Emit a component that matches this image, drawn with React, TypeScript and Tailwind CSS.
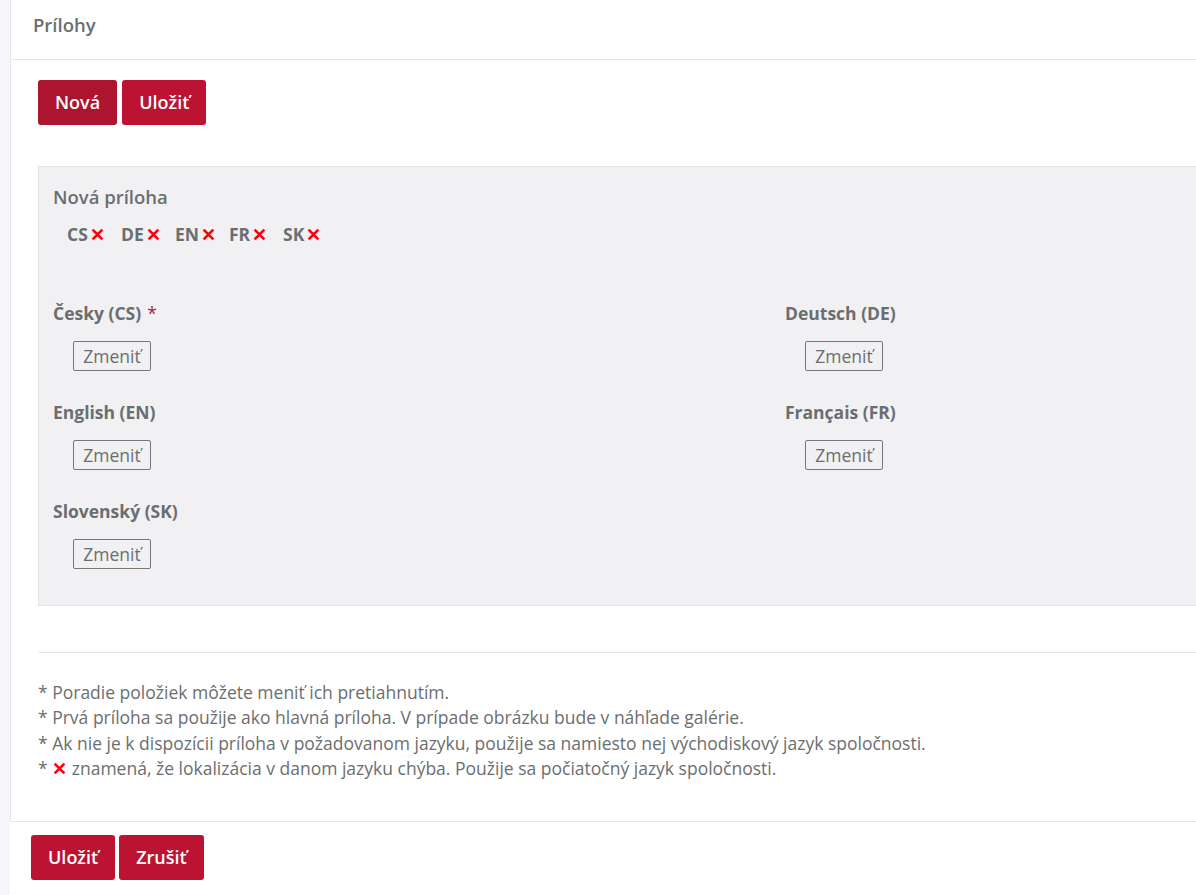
const langs = ['CS', 'DE', 'EN', 'FR', 'SK']

const fields = [
  { label: 'Česky (CS)', required: true },
  { label: 'Deutsch (DE)' },
  { label: 'English (EN)' },
  { label: 'Français (FR)' },
  { label: 'Slovenský (SK)' },
]

function Cross() {
  return <span className="text-[#ff0000] font-bold ml-[2px]">✕</span>
}

function RedButton({ children, dark }: { children: React.ReactNode; dark?: boolean }) {
  return (
    <button
      className={`h-[45px] px-[17px] rounded-[3px] text-white text-[18px] font-semibold ${
        dark ? 'bg-[#ad1430]' : 'bg-[#bb1331]'
      }`}
    >
      {children}
    </button>
  )
}

export default function App() {
  return (
    <div
      className="w-[1196px] h-[895px] overflow-hidden bg-[#f4f6f9] text-[#6b6e70]"
      style={{ fontFamily: '"Open Sans", "Liberation Sans", sans-serif' }}
    >
      <div className="ml-[10px] w-[1560px] bg-white">
        <div className="border-l border-b border-[#e6e6e6]">
          <div className="h-[60px] pt-[12px] pl-[22px] text-[18.5px] leading-[26px] font-semibold border-b border-[#e6e6e6]">
            Prílohy
          </div>
          <div className="px-[27px] pt-[20px] pb-[40px]">
            <div className="flex gap-[5px]">
              <RedButton dark>Nová</RedButton>
              <RedButton>Uložiť</RedButton>
            </div>

            <div className="mt-[41px] bg-[#f1f1f3] border border-[#e4e4e6] pl-[14px] pt-[17px] pb-[36px]">
              <div className="text-[18.5px] font-semibold leading-[26px]">Nová príloha</div>
              <div className="flex pl-[14px] mt-[12px] text-[17.5px] font-bold leading-[24px]">
                {langs.map((l) => (
                  <span key={l} className="w-[54px]">
                    {l}
                    <Cross />
                  </span>
                ))}
              </div>
              <div className="grid grid-cols-2 w-[1464px] mt-[54px] gap-y-[28px]">
                {fields.map((f) => (
                  <div key={f.label}>
                    <div className="text-[17.5px] font-bold leading-[26px]">
                      {f.label}
                      {f.required && <span className="text-[#a52a3a] font-normal ml-[6px]">*</span>}
                    </div>
                    <button className="block ml-[20px] mt-[15px] h-[30px] w-[78px] border border-[#777] rounded-[2px] text-[17.5px] leading-[28px] text-[#6b6e70] bg-transparent">
                      Zmeniť
                    </button>
                  </div>
                ))}
              </div>
            </div>

            <div className="mt-[46px] border-t border-[#e6e6e6]" />
            <div className="mt-[27px] text-[17.5px] leading-[25.3px]">
              <div>* Poradie položiek môžete meniť ich pretiahnutím.</div>
              <div>* Prvá príloha sa použije ako hlavná príloha. V prípade obrázku bude v náhľade galérie.</div>
              <div>
                * Ak nie je k dispozícii príloha v požadovanom jazyku, použije sa namiesto nej východiskový jazyk
                spoločnosti.
              </div>
              <div>
                * <span className="text-[#ff0000] font-bold">✕</span> znamená, že lokalizácia v danom jazyku chýba.
                Použije sa počiatočný jazyk spoločnosti.
              </div>
            </div>
          </div>
        </div>
        <div className="h-[80px] flex items-start gap-[4px] pl-[21px] pt-[13px]">
          <RedButton>Uložiť</RedButton>
          <RedButton>Zrušiť</RedButton>
        </div>
      </div>
    </div>
  )
}
